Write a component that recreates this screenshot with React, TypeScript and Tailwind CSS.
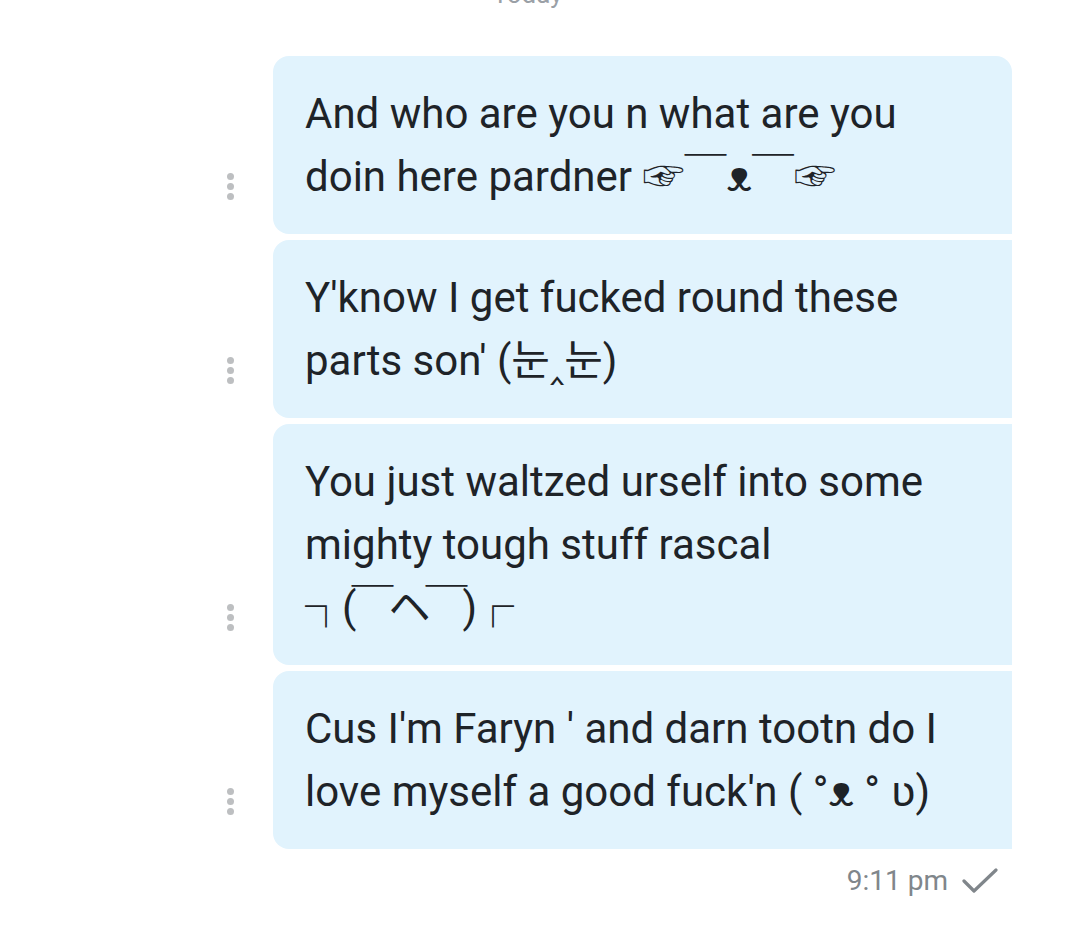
const messages: React.ReactNode[] = [
  <>
    And who are you n what are you
    <br />
    doin here pardner ☞￣ᴥ￣☞
  </>,
  <>
    Y'know I get fucked round these
    <br />
    parts son' (눈‸눈)
  </>,
  <>
    You just waltzed urself into some
    <br />
    mighty tough stuff rascal
    <br />
    <span className="tracking-[-5px]">┐(￣ヘ￣)┌</span>
  </>,
  <>
    Cus I'm Faryn ' and darn tootn do I
    <br />
    love myself a good fuck'n ( °ᴥ ° ʋ)
  </>,
];

function Dots() {
  return (
    <div className="flex flex-col gap-[3px] pb-[34px]">
      <span className="w-[7px] h-[7px] rounded-full bg-[#bdbfc1]" />
      <span className="w-[7px] h-[7px] rounded-full bg-[#bdbfc1]" />
      <span className="w-[7px] h-[7px] rounded-full bg-[#bdbfc1]" />
    </div>
  );
}

export default function App() {
  return (
    <div
      className="w-[1079px] h-[935px] bg-white overflow-hidden"
      style={{ fontFamily: 'Roboto, "Noto Sans CJK KR", "DejaVu Sans", sans-serif' }}
    >
      <div className="flex justify-center -mt-[22px] pr-[24px]">
        <span className="text-[26px] leading-[32px] text-[#9aa0a6]">Today</span>
      </div>

      <div className="mt-[46px] flex flex-col gap-[6px]">
        {messages.map((m, i) => (
          <div key={i} className="flex items-end">
            <div className="w-[273px] flex justify-end pr-[39px]">
              <Dots />
            </div>
            <div
              className={
                'w-[739px] bg-[#e1f3fd] px-[32px] py-[26px] text-[42px] leading-[63px] text-[#1e2328] rounded-l-[16px] ' +
                (i === 0 ? 'rounded-tr-[16px]' : '')
              }
            >
              {m}
            </div>
          </div>
        ))}
      </div>

      <div className="flex justify-end items-center gap-[14px] pr-[81px] mt-[16px]">
        <span className="text-[28px] leading-[32px] text-[#80868b]">9:11 pm</span>
        <svg width="36" height="26" viewBox="0 0 36 26" fill="none">
          <path d="M2 13 L12 23 L34 2" stroke="#80868b" strokeWidth="3.2" strokeLinecap="round" strokeLinejoin="round" />
        </svg>
      </div>
    </div>
  );
}
